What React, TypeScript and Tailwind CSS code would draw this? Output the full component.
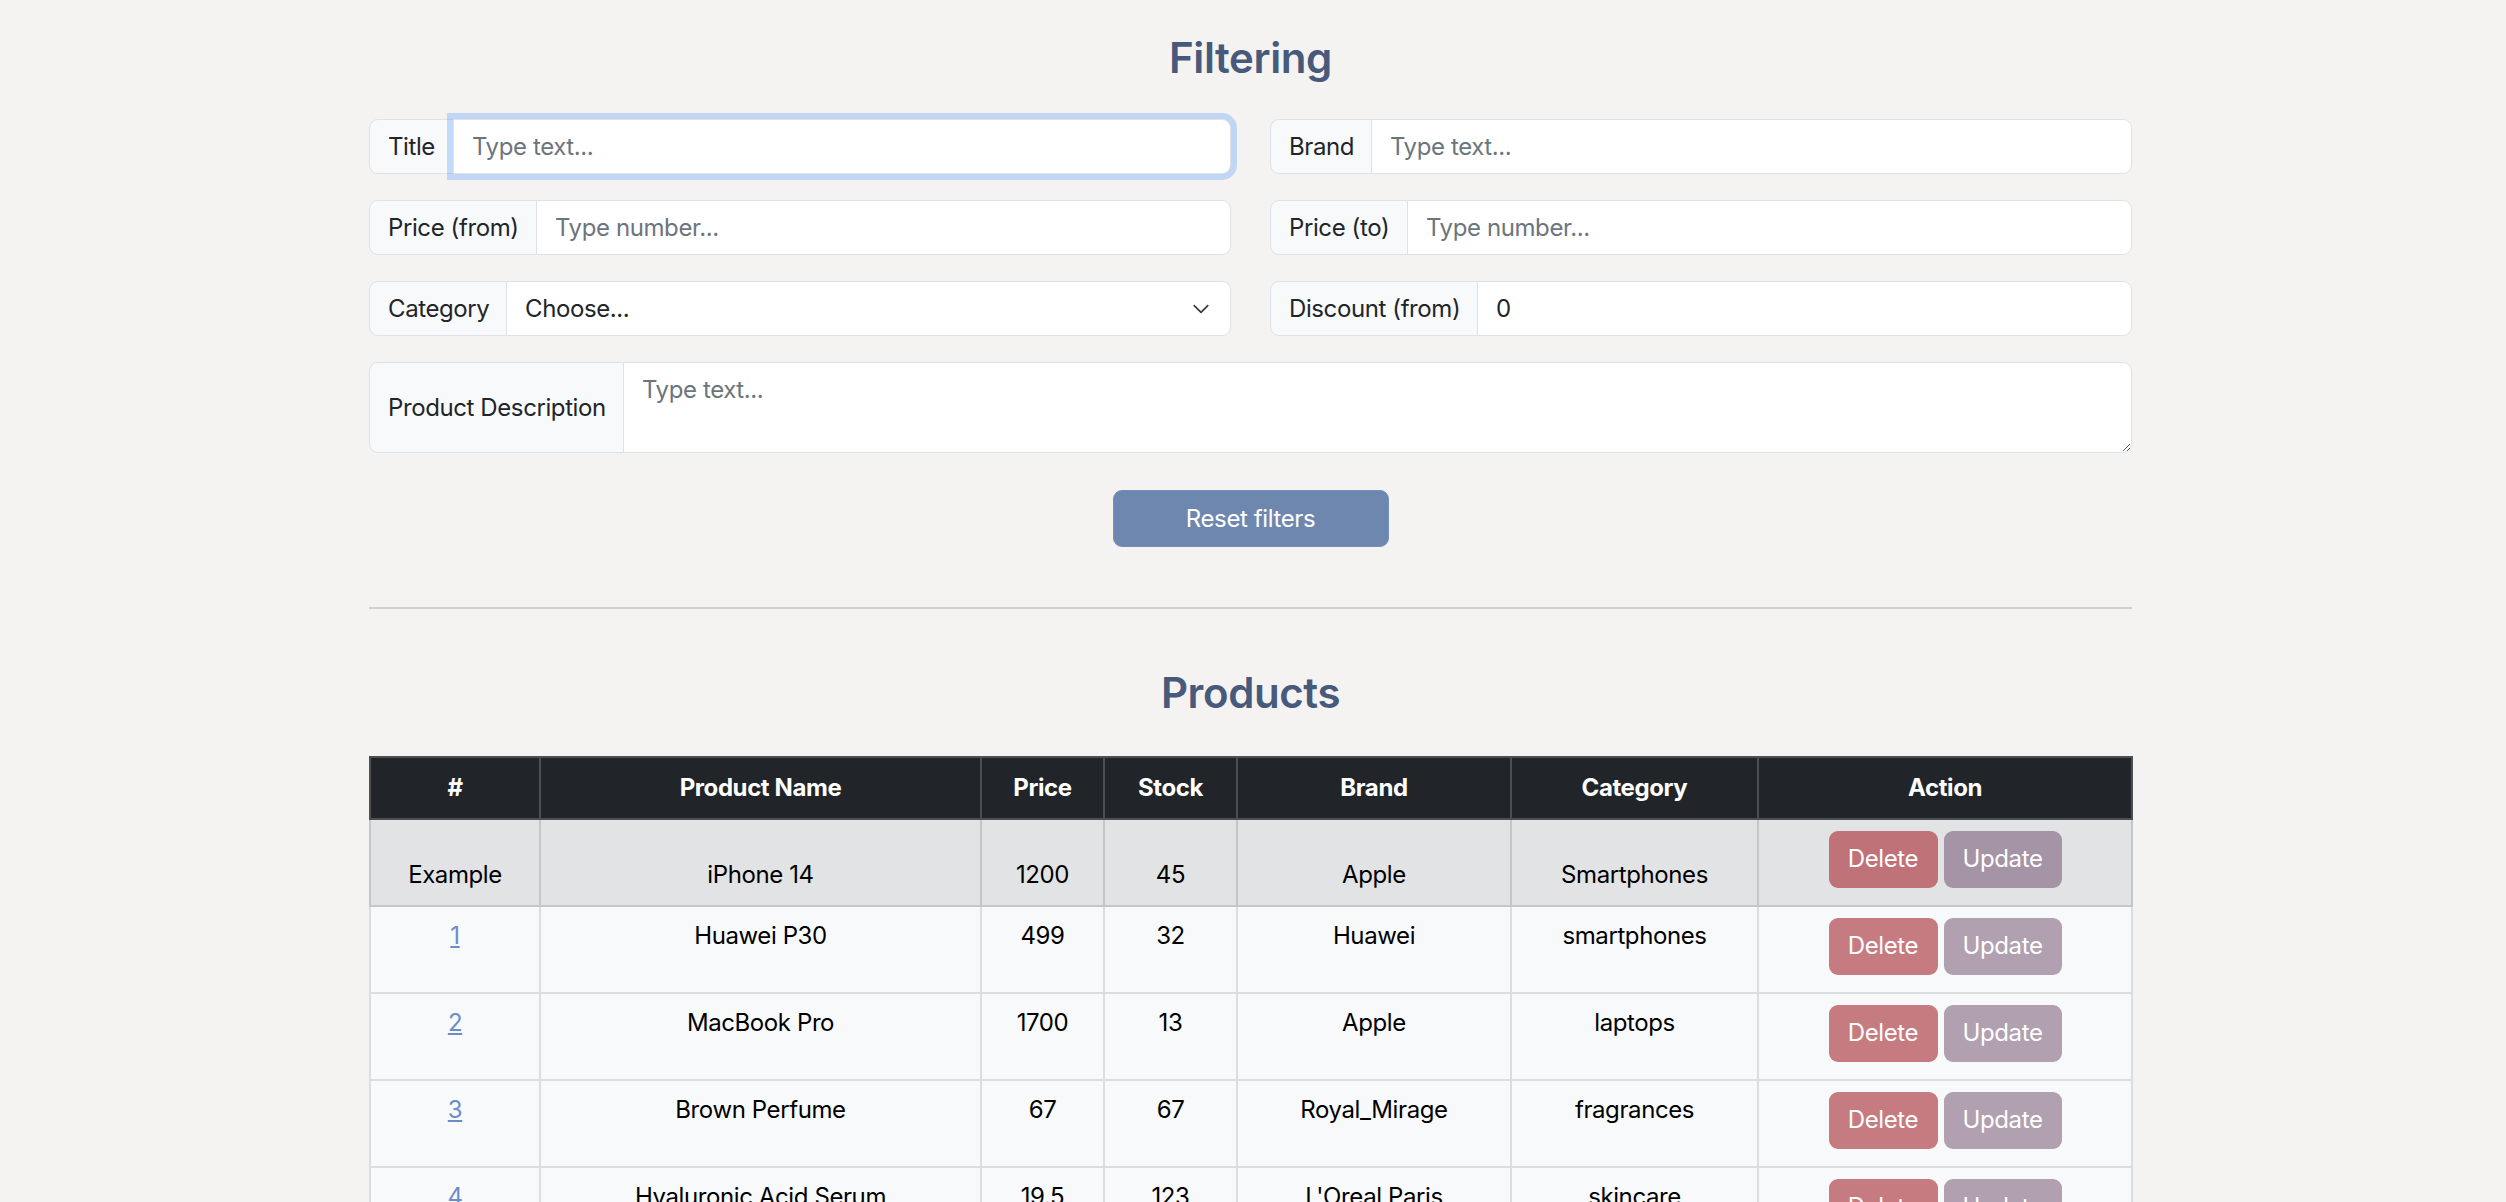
import React from "react";

type Product = {
  id: string;
  name: string;
  price: string;
  stock: string;
  brand: string;
  category: string;
};

const products: Product[] = [
  { id: "1", name: "Huawei P30", price: "499", stock: "32", brand: "Huawei", category: "smartphones" },
  { id: "2", name: "MacBook Pro", price: "1700", stock: "13", brand: "Apple", category: "laptops" },
  { id: "3", name: "Brown Perfume", price: "67", stock: "67", brand: "Royal_Mirage", category: "fragrances" },
  { id: "4", name: "Hyaluronic Acid Serum", price: "19.5", stock: "123", brand: "L'Oreal Paris", category: "skincare" },
  { id: "5", name: "Tree Oil 30ml", price: "12", stock: "133", brand: "Hemani Tea", category: "skincare" },
];

const labelCls =
  "flex shrink-0 items-center whitespace-nowrap rounded-l-[9px] border border-[#dee2e6] bg-[#f8f9fa] pl-[18px] text-[24px] text-[#212529]";
const fieldCls =
  "-ml-px min-w-0 flex-1 rounded-r-[9px] border border-[#dee2e6] bg-white px-[18px] text-[24px] text-[#212529] outline-none placeholder:text-[#6c757d]";

/** 라벨 + 입력 한 줄 */
const Group = ({ label, width, children }: { label: string; width: string; children: React.ReactNode }) => (
  <div className="flex h-[55px]">
    <span className={`${labelCls} ${width}`}>{label}</span>
    {children}
  </div>
);

const ActionButtons = () => (
  <div className="flex justify-center gap-[6px]">
    <button className="h-[57px] w-[109px] rounded-[9px] bg-[#c57b80] text-[24px] text-white">Delete</button>
    <button className="h-[57px] w-[118px] rounded-[9px] bg-[#b0a0b0] text-[24px] text-white">Update</button>
  </div>
);

export default function App() {
  return (
    <div className="min-h-screen bg-[#f4f3f1] font-['Inter','Liberation_Sans',sans-serif] tracking-[-0.025em] text-[#212529]">
      <div className="ml-[369px] w-[1763px] pt-[33px] pb-10">
        {/* 필터 */}
        <h3 className="text-center text-[42px] leading-[1.2] font-semibold text-[#485a7b]">Filtering</h3>

        <div className="mt-[36px] grid grid-cols-2 gap-x-[39px] gap-y-[26px]">
          <Group label="Title" width="w-[85px]">
            <input
              className={`${fieldCls} relative z-10 border-[#86b7fe] shadow-[0_0_0_6px_rgba(13,110,253,0.22)]`}
              placeholder="Type text..."
            />
          </Group>
          <Group label="Brand" width="w-[102px]">
            <input className={fieldCls} placeholder="Type text..." />
          </Group>
          <Group label="Price (from)" width="w-[168px]">
            <input className={fieldCls} placeholder="Type number..." />
          </Group>
          <Group label="Price (to)" width="w-[138px]">
            <input className={fieldCls} placeholder="Type number..." />
          </Group>
          <Group label="Category" width="w-[138px]">
            <div className="relative -ml-px flex min-w-0 flex-1">
              <select className="w-full appearance-none rounded-r-[9px] border border-[#dee2e6] bg-white px-[18px] text-[24px] text-[#212529] outline-none">
                <option>Choose...</option>
                <option>smartphones</option>
                <option>laptops</option>
                <option>fragrances</option>
                <option>skincare</option>
              </select>
              <svg
                className="pointer-events-none absolute top-1/2 right-[18px] h-[18px] w-[24px] -translate-y-1/2"
                viewBox="0 0 16 16"
                fill="none"
                stroke="#343a40"
                strokeWidth="1.5"
                strokeLinecap="round"
                strokeLinejoin="round"
              >
                <path d="m2 5 6 6 6-6" />
              </svg>
            </div>
          </Group>
          <Group label="Discount (from)" width="w-[208px]">
            <input className={fieldCls} defaultValue="0" />
          </Group>

          <div className="col-span-2 flex h-[91px]">
            <span className={`${labelCls} w-[255px]`}>Product Description</span>
            <textarea className={`${fieldCls} resize-y py-[9px] leading-[36px]`} placeholder="Type text..." />
          </div>
        </div>

        <button className="mx-auto mt-[37px] block h-[57px] w-[276px] rounded-[9px] border border-[#7590b8] bg-[#6e87af] text-[24px] text-white">
          Reset filters
        </button>

        <div className="mt-[60px] h-[2px] bg-[#d1cfcc]" />

        {/* 상품 목록 */}
        <h3 className="mt-[59px] text-center text-[42px] leading-[1.2] font-semibold text-[#485a7b]">Products</h3>

        <table className="mt-[37px] w-[1762px] table-fixed border-collapse text-center text-[24px]">
          <colgroup>
            <col className="w-[170px]" />
            <col className="w-[441px]" />
            <col className="w-[123px]" />
            <col className="w-[133px]" />
            <col className="w-[274px]" />
            <col className="w-[247px]" />
            <col className="w-[374px]" />
          </colgroup>
          <thead>
            <tr className="h-[62px] bg-[#212529] font-bold text-white">
              {["#", "Product Name", "Price", "Stock", "Brand", "Category", "Action"].map((h) => (
                <th key={h} className="border-2 border-[#4b4f53] px-3">
                  {h}
                </th>
              ))}
            </tr>
          </thead>
          <tbody className="text-black">
            <tr className="h-[87px] bg-[#e2e3e5]">
              {["Example", "iPhone 14", "1200", "45", "Apple", "Smartphones"].map((v, i) => (
                <td key={i} className="border-2 border-[#c5c6c8] px-3 pb-[12px] align-bottom leading-[36px]">
                  {v}
                </td>
              ))}
              <td className="border-2 border-[#c5c6c8] px-3 pt-[11px] align-top">
                <div className="flex justify-center gap-[6px]">
                  <button className="h-[57px] w-[109px] rounded-[9px] bg-[#bf7277] text-[24px] text-white">Delete</button>
                  <button className="h-[57px] w-[118px] rounded-[9px] bg-[#a594a6] text-[24px] text-white">Update</button>
                </div>
              </td>
            </tr>
            {products.map((p) => (
              <tr key={p.id} className="h-[87px] bg-[#f8f9fa]">
                <td className="border-2 border-[#dcdddf] px-3 pt-[11px] align-top leading-[36px]">
                  <a href="#" className="text-[#6b8cc8] underline">
                    {p.id}
                  </a>
                </td>
                <td className="border-2 border-[#dcdddf] px-3 pt-[11px] align-top leading-[36px]">{p.name}</td>
                <td className="border-2 border-[#dcdddf] px-3 pt-[11px] align-top leading-[36px]">{p.price}</td>
                <td className="border-2 border-[#dcdddf] px-3 pt-[11px] align-top leading-[36px]">{p.stock}</td>
                <td className="border-2 border-[#dcdddf] px-3 pt-[11px] align-top leading-[36px]">{p.brand}</td>
                <td className="border-2 border-[#dcdddf] px-3 pt-[11px] align-top leading-[36px]">{p.category}</td>
                <td className="border-2 border-[#dcdddf] px-3 pt-[11px] align-top">
                  <ActionButtons />
                </td>
              </tr>
            ))}
          </tbody>
        </table>
      </div>
    </div>
  );
}
